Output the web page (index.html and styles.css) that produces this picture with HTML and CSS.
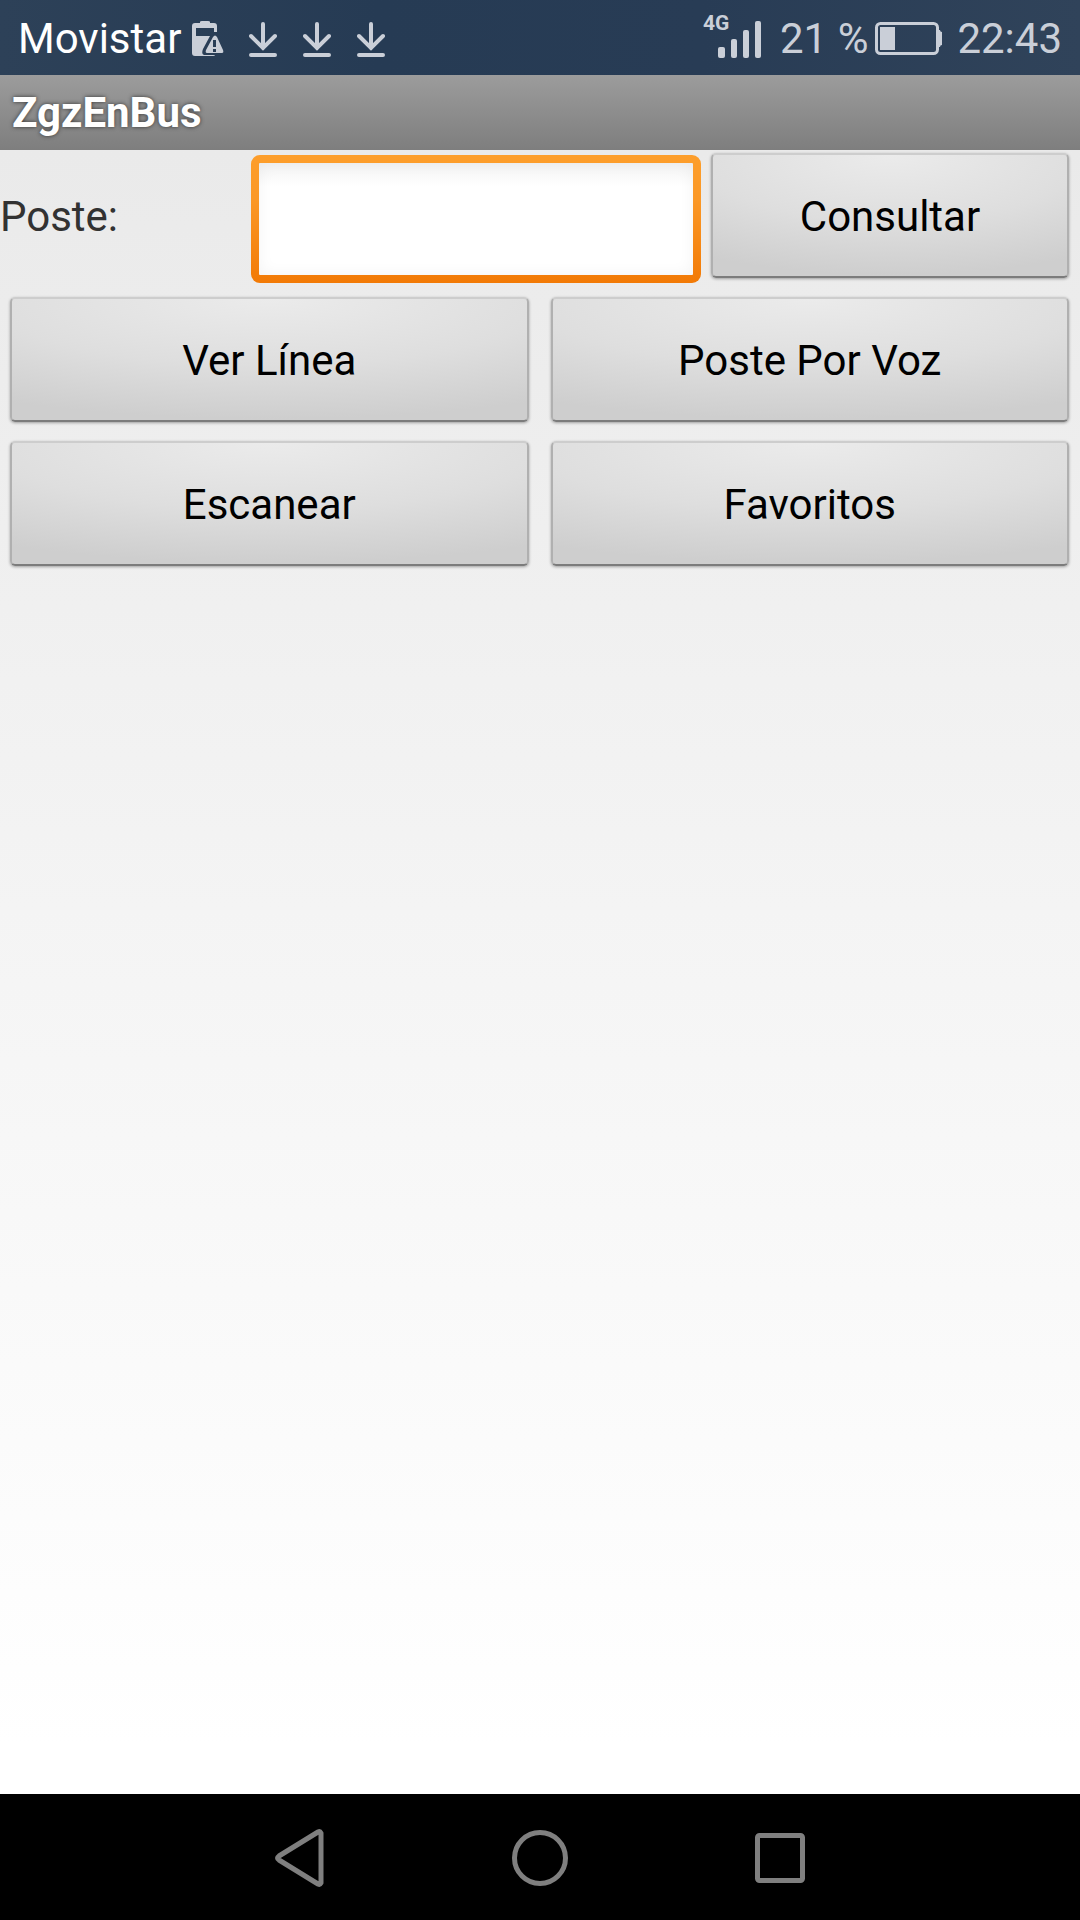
FILE: index.html
```
<!DOCTYPE html>
<html lang="es">
<head>
  <meta charset="UTF-8" />
  <meta name="viewport" content="width=device-width, initial-scale=1.0"/>
  <title>ZgzEnBus</title>
  <link rel="stylesheet" href="styles.css">
</head>
<body>

  <div class="status-bar">
    <div class="status-left">
      <span class="carrier">Movistar</span>
      <svg class="battery-alert" width="32" height="38" viewBox="0 0 32 38" aria-hidden="true">
        <path fill="#cacfd8" fill-rule="evenodd" d="M8 3V2Q8 1 10 1h6q2 0 2 1v1h4q3 0 3 3v6h-3V8H4v8h14L11 29q-2 5 1 6h11q0 1-2 1H3q-3 0-3-3V6q0-3 3-3z"/>
        <path fill="#cacfd8" fill-rule="evenodd" d="M21 17q2-3 4 0l6 13q1 3-1 3H15q-2 0-1-3zM21 20v7h3v-7zM21 29v3h3v-3z"/>
      </svg>
      <div class="downloads">
        <svg width="28" height="36" viewBox="0 0 28 36" aria-hidden="true"><path d="M14 3v24M2 15l12 12 12-12M2 34h24"/></svg>
        <svg width="28" height="36" viewBox="0 0 28 36" aria-hidden="true"><path d="M14 3v24M2 15l12 12 12-12M2 34h24"/></svg>
        <svg width="28" height="36" viewBox="0 0 28 36" aria-hidden="true"><path d="M14 3v24M2 15l12 12 12-12M2 34h24"/></svg>
      </div>
    </div>
    <div class="status-right">
      <div class="signal">
        <span class="network">4G</span>
        <svg width="44" height="38" viewBox="0 0 44 38" fill="#cacfd8" aria-hidden="true">
          <rect x="0" y="27" width="7" height="11" rx="2"/>
          <rect x="13" y="19" width="6" height="19" rx="2"/>
          <rect x="25" y="10" width="6" height="28" rx="2"/>
          <rect x="37" y="1" width="6" height="37" rx="2"/>
        </svg>
      </div>
      <span class="percent">21 %</span>
      <svg class="battery" width="68" height="34" viewBox="0 0 68 34" aria-hidden="true">
        <rect x="1.5" y="1.5" width="61" height="30" rx="4" fill="none" stroke="#cacfd8" stroke-width="3"/>
        <rect x="5" y="5" width="15" height="23" fill="#cacfd8"/>
        <path d="M63 8h2q0 2 2 2v13q-2 0-2 2h-2z" fill="#cacfd8"/>
      </svg>
      <span class="clock">22:43</span>
    </div>
  </div>

  <h1 class="title-bar">ZgzEnBus</h1>

  <main class="content">
    <form class="search-row" onsubmit="return false">
      <label for="poste">Poste:</label>
      <input type="text" id="poste" class="poste-input" autocomplete="off" />
      <button type="submit" class="btn">Consultar</button>
    </form>

    <div class="menu">
      <button type="button" class="btn">Ver Línea</button>
      <button type="button" class="btn">Poste Por Voz</button>
      <button type="button" class="btn">Escanear</button>
      <button type="button" class="btn">Favoritos</button>
    </div>
  </main>

  <nav class="nav-bar">
    <button type="button" aria-label="Atrás">
      <svg width="60" height="60" viewBox="0 0 60 60"><path d="M51 6v50q-1 2-3 1L9 33q-3-2 0-4L48 5q2-1 3 1z"/></svg>
    </button>
    <button type="button" aria-label="Inicio">
      <svg width="60" height="60" viewBox="0 0 60 60"><circle cx="30" cy="31" r="25.5"/></svg>
    </button>
    <button type="button" aria-label="Recientes">
      <svg width="60" height="60" viewBox="0 0 60 60"><rect x="7.5" y="8.5" width="45" height="45" rx="2"/></svg>
    </button>
  </nav>

</body>
</html>
```
FILE: styles.css
```
* {
  box-sizing: border-box;
}

body {
  font-family: Roboto, sans-serif;
  font-size: 42px;
  margin: 0;
  min-height: 100vh;
  display: flex;
  flex-direction: column;
}

svg {
  display: block;
}

/* status bar */
.status-bar {
  display: flex;
  justify-content: space-between;
  height: 75px;
  padding: 2px 18px 0;
  background: linear-gradient(90deg, #2d4158, #263b54 35%, #283c55 65%, #30435a);
  color: #cacfd8;
  line-height: 80px;
}

.status-left,
.status-right {
  display: flex;
  align-items: center;
}

.carrier {
  color: #fff;
}

.battery-alert {
  margin: 0 25px 0 11px;
}

.downloads {
  display: flex;
  gap: 26px;
}

.downloads path {
  fill: none;
  stroke: #cacfd8;
  stroke-width: 4;
  stroke-linecap: round;
}

.signal {
  position: relative;
  margin-right: 18px;
}

.network {
  position: absolute;
  left: -15px;
  top: -9px;
  font-size: 21px;
  line-height: 24px;
  font-weight: bold;
}

.battery {
  margin: 0 14px 0 7px;
}

/* title */
.title-bar {
  margin: 0;
  padding-left: 12px;
  height: 75px;
  line-height: 75px;
  font-size: 42px;
  font-weight: bold;
  color: #fff;
  text-shadow: 0 0 4px #333;
  background: linear-gradient(#9c9c9c, #7e7e7e);
}

/* main screen */
.content {
  flex: 1;
  padding-top: 3px;
  background: linear-gradient(#eaeaea, #fff 97%);
}

.search-row {
  display: grid;
  grid-template-columns: 241px 1fr 358px;
  column-gap: 10px;
  align-items: start;
  padding-right: 11px;
}

.search-row label {
  line-height: 127px;
  color: #323232;
}

.poste-input {
  min-width: 0;
  height: 128px;
  margin-top: 2px;
  padding: 0 16px;
  border: 8px solid transparent;
  border-radius: 9px;
  outline: none;
  font: inherit;
  background:
    linear-gradient(#f3f3f3, #fff 24px) padding-box,
    linear-gradient(#fd9e2b, #fb9826 35%, #f27a06) border-box;
  box-shadow: inset 0 0 16px #0000000d;
}

.menu {
  display: grid;
  grid-template-columns: 1fr 1fr;
  gap: 19px 22px;
  padding: 14px 11px 0 10px;
}

.btn {
  height: 125px;
  padding: 1px 0 0;
  border: 2px solid;
  border-color: #cdcdcd #b0b0b0 #7c7c7c;
  border-radius: 5px;
  font: inherit;
  color: #000;
  background: radial-gradient(ellipse 110% 110% at 50% 0, #ebebeb, #dedede 50%, #cecece 90%);
  box-shadow: 0 1px 3px #00000055;
  cursor: pointer;
}

.btn:active {
  background: #fb9826;
}

/* navigation buttons */
.nav-bar {
  display: flex;
  justify-content: center;
  gap: 180px;
  height: 126px;
  background: #000;
}

.nav-bar button {
  padding: 0;
  border: none;
  background: none;
  cursor: pointer;
}

.nav-bar svg {
  fill: none;
  stroke: #7f7f7f;
  stroke-width: 5;
  stroke-linejoin: round;
}
```
